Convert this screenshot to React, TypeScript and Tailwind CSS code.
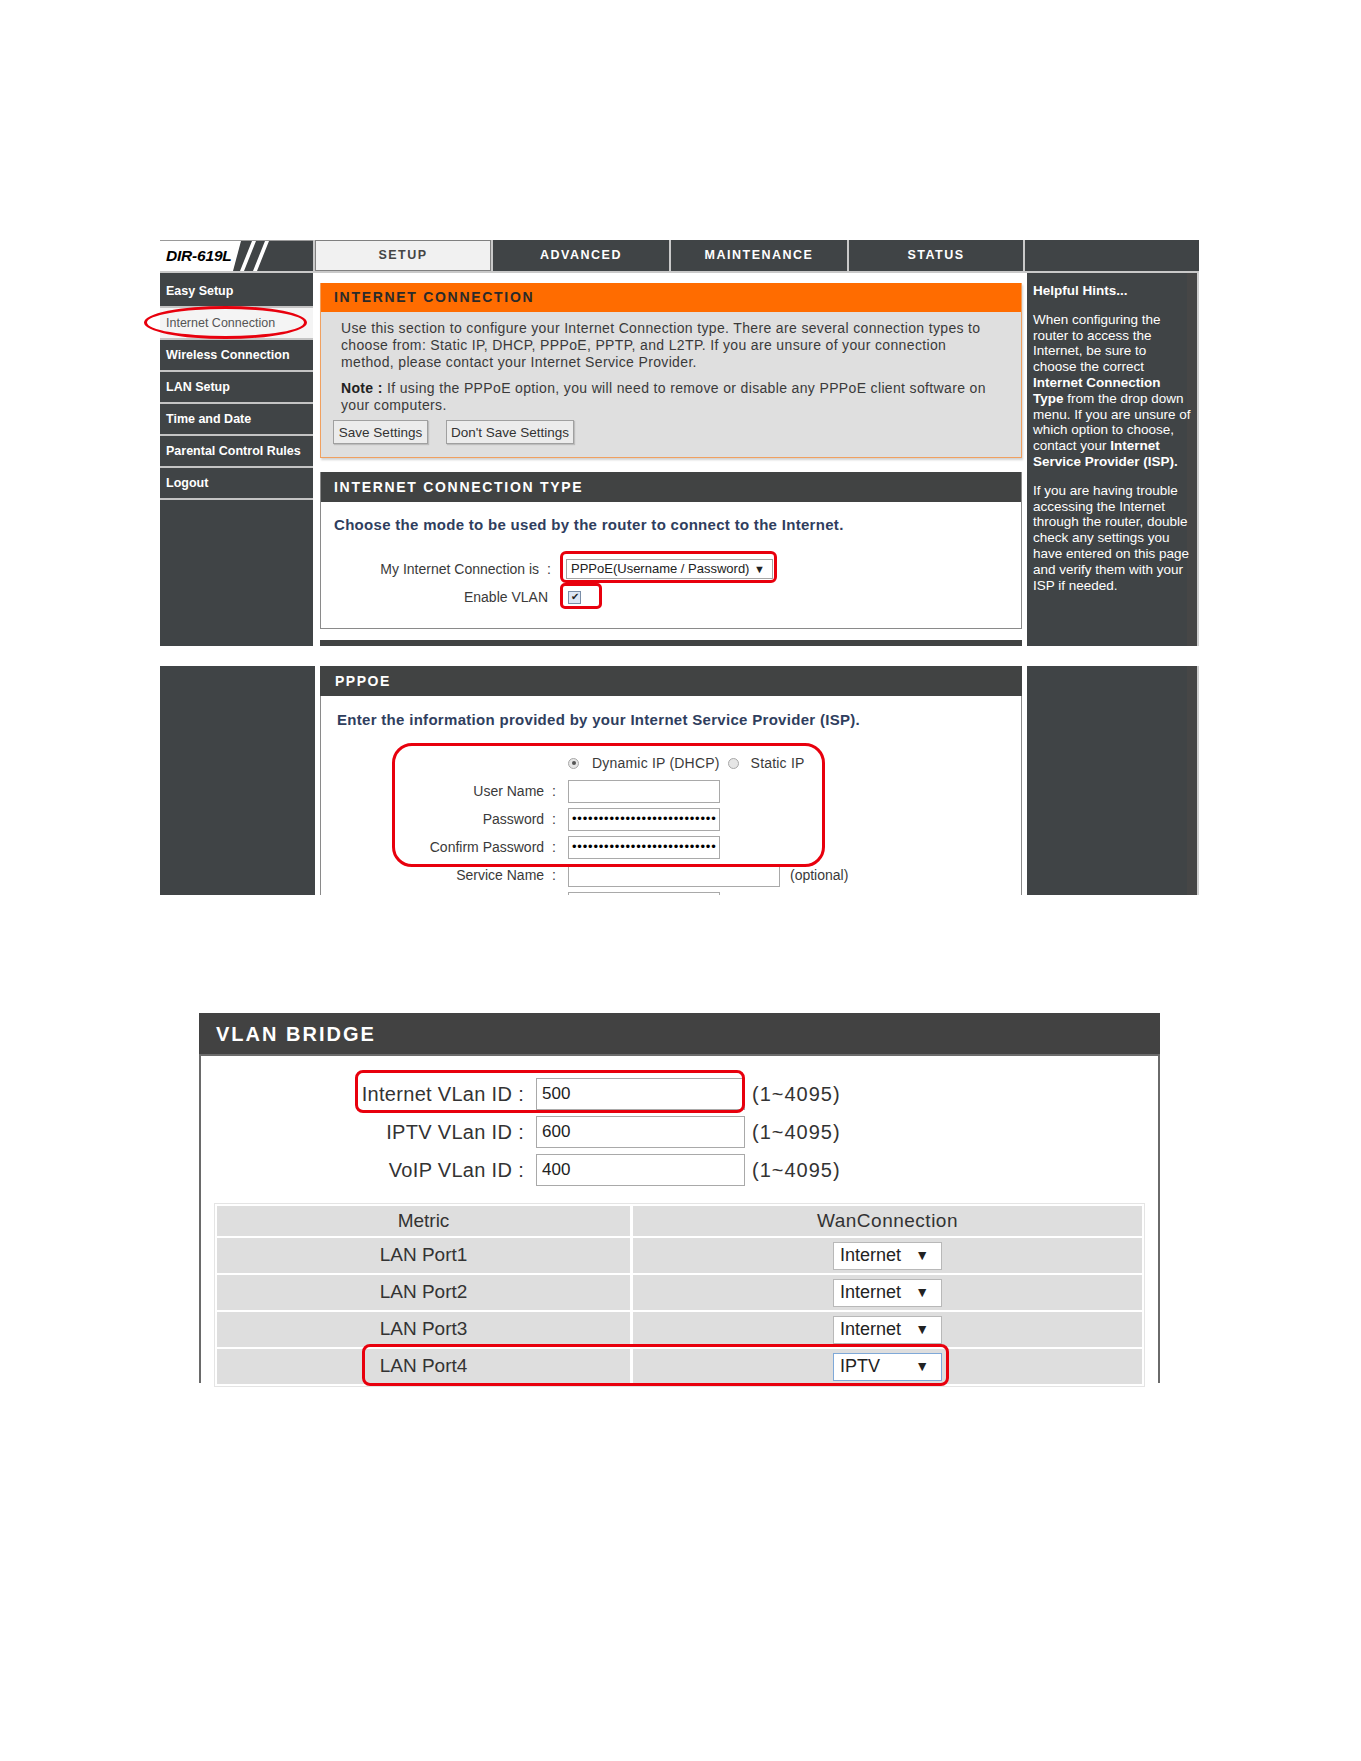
import React from "react";

const TABS = [
  { label: "SETUP", w: "w-[176px]", active: true },
  { label: "ADVANCED", w: "w-[176px]", active: false },
  { label: "MAINTENANCE", w: "w-[176px]", active: false },
  { label: "STATUS", w: "w-[174px]", active: false },
];

const NAV = [
  "Easy Setup",
  "Internet Connection",
  "Wireless Connection",
  "LAN Setup",
  "Time and Date",
  "Parental Control Rules",
  "Logout",
];

const PORTS = [
  { port: "LAN Port1", wan: "Internet" },
  { port: "LAN Port2", wan: "Internet" },
  { port: "LAN Port3", wan: "Internet" },
  { port: "LAN Port4", wan: "IPTV" },
];

const DOTS = "•".repeat(27);

function Logo() {
  return (
    <div className="w-[153px] h-full bg-white flex items-center border-t border-[#9a9a9a]">
      <span className="pl-[6px] text-[15.5px] font-bold italic text-black tracking-[-0.2px]">DIR-619L</span>
      <svg className="ml-auto" width="80" height="30" viewBox="0 0 80 30">
        <polygon points="8,0 80,0 80,30 0,30" fill="#404446" />
        <polygon points="19,0 23,0 11,30 7,30" fill="#ffffff" />
        <polygon points="32,0 36,0 24,30 20,30" fill="#ffffff" />
      </svg>
    </div>
  );
}

function RedBox({ className }: { className: string }) {
  return <div className={`absolute border-[3px] border-[#e8000d] pointer-events-none ${className}`} />;
}

function Radio({ checked }: { checked?: boolean }) {
  return (
    <span className="w-[11px] h-[11px] rounded-full border border-[#a8a8a8] bg-[#e6e6e6] flex items-center justify-center">
      {checked && <span className="w-[4px] h-[4px] rounded-full bg-[#555]" />}
    </span>
  );
}

function Field({ w, children }: { w: string; children?: React.ReactNode }) {
  return (
    <div className={`${w} h-[23px] border border-[#a9a9a9] bg-white flex items-center px-[3px] overflow-hidden`}>
      {children}
    </div>
  );
}

function Label({ text }: { text: string }) {
  return (
    <div className="text-right text-[14px] text-[#3a3a3a] whitespace-nowrap">
      {text}
      <span className="ml-[8px]">:</span>
    </div>
  );
}

function Hints() {
  return (
    <div className="w-[172px] h-full bg-[#404446] border-r-2 border-[#cfcfcf] shadow-[inset_-10px_0_0_#464646] pl-[6px] pt-[10px] text-white text-[13.5px] leading-[15.8px] whitespace-nowrap">
      <div className="font-bold">Helpful Hints...</div>
      <p className="mt-[13px]">
        When configuring the
        <br />
        router to access the
        <br />
        Internet, be sure to
        <br />
        choose the correct
        <br />
        <b>Internet Connection</b>
        <br />
        <b>Type</b> from the drop down
        <br />
        menu. If you are unsure of
        <br />
        which option to choose,
        <br />
        contact your <b>Internet</b>
        <br />
        <b>Service Provider (ISP).</b>
      </p>
      <p className="mt-[13px]">
        If you are having trouble
        <br />
        accessing the Internet
        <br />
        through the router, double
        <br />
        check any settings you
        <br />
        have entered on this page
        <br />
        and verify them with your
        <br />
        ISP if needed.
      </p>
    </div>
  );
}

function SetupPanel() {
  return (
    <div className="relative ml-[160px] w-[1039px] h-[406px]">
      {/* top bar */}
      <div className="flex h-[33px] gap-[2px] bg-[#c9c9c9] pb-[2px]">
        <Logo />
        {TABS.map((t) => (
          <div
            key={t.label}
            className={`${t.w} flex items-center justify-center text-[12.5px] font-bold tracking-[1.5px] ${
              t.active ? "bg-[#f1f1f1] border border-[#808080] text-[#454545]" : "bg-[#404446] text-white"
            }`}
          >
            {t.label}
          </div>
        ))}
        <div className="flex-1 bg-[#404446]" />
      </div>

      <div className="flex h-[373px]">
        {/* side menu */}
        <div className="w-[153px] bg-[#404446] pt-[3px]">
          {NAV.map((n) => {
            const sel = n === "Internet Connection";
            return (
              <div
                key={n}
                className={`h-[32px] border-b-2 border-[#c4c4c4] flex items-center pl-[6px] text-[12.5px] whitespace-nowrap ${
                  sel ? "bg-[#f4f4f4] text-[#555]" : "text-white font-bold"
                }`}
              >
                {n}
              </div>
            );
          })}
        </div>

        <div className="w-[702px] ml-[7px] pt-[10px] flex flex-col">
          {/* internet connection */}
          <div className="h-[175px] shrink-0 border-x border-b border-[#f0a060] bg-[#dfdfdf] shadow-[1px_2px_2px_rgba(0,0,0,0.18)]">
            <div className="h-[29px] bg-[#ff6c00] flex items-center pl-[13px] text-[14px] font-bold tracking-[1.7px] text-[#2a2a2a]">
              INTERNET CONNECTION
            </div>
            <div className="pl-[20px] pt-[8px] text-[14px] leading-[17px] tracking-[0.35px] text-[#3a3a3a] whitespace-nowrap">
              <p>
                Use this section to configure your Internet Connection type. There are several connection types to
                <br />
                choose from: Static IP, DHCP, PPPoE, PPTP, and L2TP. If you are unsure of your connection
                <br />
                method, please contact your Internet Service Provider.
              </p>
              <p className="mt-[9px]">
                <b className="text-[#222]">Note :</b> If using the PPPoE option, you will need to remove or disable any PPPoE client software on
                <br />
                your computers.
              </p>
              <div className="mt-[6px] -ml-[8px] flex gap-[18px] tracking-normal">
                <button className="w-[95px] h-[24px] bg-[#ececec] border border-[#a0a0a0] shadow-[1px_1px_1px_rgba(0,0,0,0.15)] text-[13.5px] text-[#333]">
                  Save Settings
                </button>
                <button className="w-[128px] h-[24px] bg-[#ececec] border border-[#a0a0a0] shadow-[1px_1px_1px_rgba(0,0,0,0.15)] text-[13.5px] text-[#333]">
                  Don't Save Settings
                </button>
              </div>
            </div>
          </div>

          {/* connection type */}
          <div className="mt-[14px] h-[157px] shrink-0 border-x border-b border-[#8a8a8a] bg-white">
            <div className="h-[30px] bg-[#414343] flex items-center pl-[13px] text-[14px] font-bold tracking-[1.7px] text-white">
              INTERNET CONNECTION TYPE
            </div>
            <div className="pt-[13px] pl-[13px] text-[15px] leading-[20px] tracking-[0.3px] font-bold text-[#2f3e5e] whitespace-nowrap">
              Choose the mode to be used by the router to connect to the Internet.
            </div>
            <div className="mt-[20px] grid grid-cols-[230px_1fr] gap-x-[15px]">
              <div className="h-[28px] flex items-center justify-end">
                <Label text="My Internet Connection is" />
              </div>
              <div className="h-[28px] flex items-center">
                <div className="w-[207px] h-[20px] border border-[#a5a5a5] bg-white flex items-center justify-between pl-[4px] pr-[7px] text-[13px] text-[#222]">
                  <span>PPPoE(Username / Password)</span>
                  <span className="text-[11px]">▼</span>
                </div>
              </div>
              <div className="h-[28px] flex items-center justify-end pr-[3px] text-[14px] text-[#3a3a3a]">Enable VLAN</div>
              <div className="h-[28px] flex items-center pl-[2px]">
                <span className="w-[13px] h-[13px] border border-[#7a8ea8] bg-[#dce6f4] flex items-center justify-center text-[10px] leading-none text-[#222]">
                  ✔
                </span>
              </div>
            </div>
          </div>

          <div className="mt-[11px] h-[6px] shrink-0 bg-[#414343]" />
        </div>

        <div className="ml-[5px] flex">
          <Hints />
        </div>
      </div>

      <div className="absolute left-[-16px] top-[66px] w-[163px] h-[33px] rounded-[50%] border-[3.5px] border-[#e8000d]" />
      <RedBox className="left-[400px] top-[311px] w-[217px] h-[32px] rounded-[6px]" />
      <RedBox className="left-[400px] top-[343px] w-[42px] h-[26px] rounded-[5px]" />
    </div>
  );
}

function PppoePanel() {
  return (
    <div className="relative ml-[160px] mt-[20px] w-[1039px] h-[229px] flex overflow-hidden">
      <div className="w-[155px] bg-[#404446]" />
      <div className="w-[702px] ml-[5px] flex flex-col">
        <div className="h-[30px] shrink-0 bg-[#414343] flex items-center pl-[15px] text-[14px] font-bold tracking-[1.5px] text-white">
          PPPOE
        </div>
        <div className="flex-1 min-h-0 border-x border-[#8a8a8a] bg-white">
          <div className="pt-[14px] pl-[16px] text-[15px] leading-[20px] tracking-[0.3px] font-bold text-[#2f3e5e] whitespace-nowrap">
            Enter the information provided by your Internet Service Provider (ISP).
          </div>
          <div className="mt-[19px] grid grid-cols-[235px_1fr] gap-x-[12px] auto-rows-[28px] items-center">
            <div />
            <div className="flex items-center text-[14px] tracking-[0.2px] text-[#3a3a3a]">
              <Radio checked />
              <span className="ml-[13px]">Dynamic IP (DHCP)</span>
              <span className="ml-[8px]">
                <Radio />
              </span>
              <span className="ml-[12px]">Static IP</span>
            </div>
            <Label text="User Name" />
            <Field w="w-[152px]" />
            <Label text="Password" />
            <Field w="w-[152px]">
              <span className="text-[13px] tracking-[0.8px] text-black whitespace-nowrap">{DOTS}</span>
            </Field>
            <Label text="Confirm Password" />
            <Field w="w-[152px]">
              <span className="text-[13px] tracking-[0.8px] text-black whitespace-nowrap">{DOTS}</span>
            </Field>
            <Label text="Service Name" />
            <div className="flex items-center">
              <Field w="w-[212px]" />
              <span className="ml-[10px] text-[14px] text-[#3a3a3a]">(optional)</span>
            </div>
            <div />
            <Field w="w-[152px]" />
          </div>
        </div>
      </div>
      <div className="ml-[5px] w-[172px] h-[229px] bg-[#404446] border-r-2 border-[#cfcfcf] shadow-[inset_-10px_0_0_#464646]" />

      <RedBox className="left-[232px] top-[77px] w-[433px] h-[124px] rounded-[20px]" />
    </div>
  );
}

function VlanInput({ value }: { value: string }) {
  return (
    <div className="w-[209px] h-[32px] border border-[#a9a9a9] bg-white flex items-center pl-[5px] text-[17px] tracking-normal text-[#222]">
      {value}
    </div>
  );
}

function VlanBridge() {
  const rows = [
    { label: "Internet VLan ID", value: "500" },
    { label: "IPTV VLan ID", value: "600" },
    { label: "VoIP VLan ID", value: "400" },
  ];
  return (
    <div className="relative ml-[199px] mt-[118px] w-[961px] h-[370px]">
      <div className="h-[43px] bg-[#424242] border-b-2 border-[#6b6b6b] flex items-center pl-[17px] text-[20px] font-bold tracking-[2px] text-white">
        VLAN BRIDGE
      </div>
      <div className="h-[327px] border-x-2 border-[#6a6a6a] bg-white pt-[19px]">
        <div className="grid grid-cols-[323px_auto_1fr] gap-x-[12px] auto-rows-[38px] items-center text-[20px] tracking-[0.3px] text-[#333]">
          {rows.map((r) => (
            <React.Fragment key={r.label}>
              <div className="text-right whitespace-nowrap">
                {r.label}
                <span className="ml-[6px]">:</span>
              </div>
              <VlanInput value={r.value} />
              <div className="-ml-[5px] tracking-[1px]">(1~4095)</div>
            </React.Fragment>
          ))}
        </div>

        <div className="mt-[14px] mx-[13px] border border-[#e4e4e4] p-[2px]">
          <div className="grid grid-cols-[413px_1fr] gap-x-[3px] gap-y-[2px] text-[19px] text-[#333]">
            <div className="h-[30px] bg-[#dedede] flex items-center justify-center">Metric</div>
            <div className="h-[30px] bg-[#dedede] flex items-center justify-center tracking-[0.5px]">WanConnection</div>
            {PORTS.map((p) => (
              <React.Fragment key={p.port}>
                <div className="h-[35px] bg-[#dedede] flex items-center justify-center">{p.port}</div>
                <div className="h-[35px] bg-[#dedede] flex items-center justify-center">
                  <div
                    className={`w-[109px] h-[28px] bg-white border flex items-center justify-between pl-[6px] pr-[12px] text-[18px] text-[#222] ${
                      p.wan === "IPTV" ? "border-[#7fa9d8]" : "border-[#b8b8b8]"
                    }`}
                  >
                    <span>{p.wan}</span>
                    <span className="text-[14px]">▼</span>
                  </div>
                </div>
              </React.Fragment>
            ))}
          </div>
        </div>
      </div>

      <RedBox className="left-[156px] top-[57px] w-[390px] h-[43px] rounded-[8px]" />
      <RedBox className="left-[163px] top-[331px] w-[587px] h-[42px] rounded-[8px]" />
    </div>
  );
}

export default function App() {
  return (
    <div className="w-[1361px] min-h-[1761px] bg-white pt-[240px] font-['Liberation_Sans',Arial,sans-serif]">
      <SetupPanel />
      <PppoePanel />
      <VlanBridge />
    </div>
  );
}
